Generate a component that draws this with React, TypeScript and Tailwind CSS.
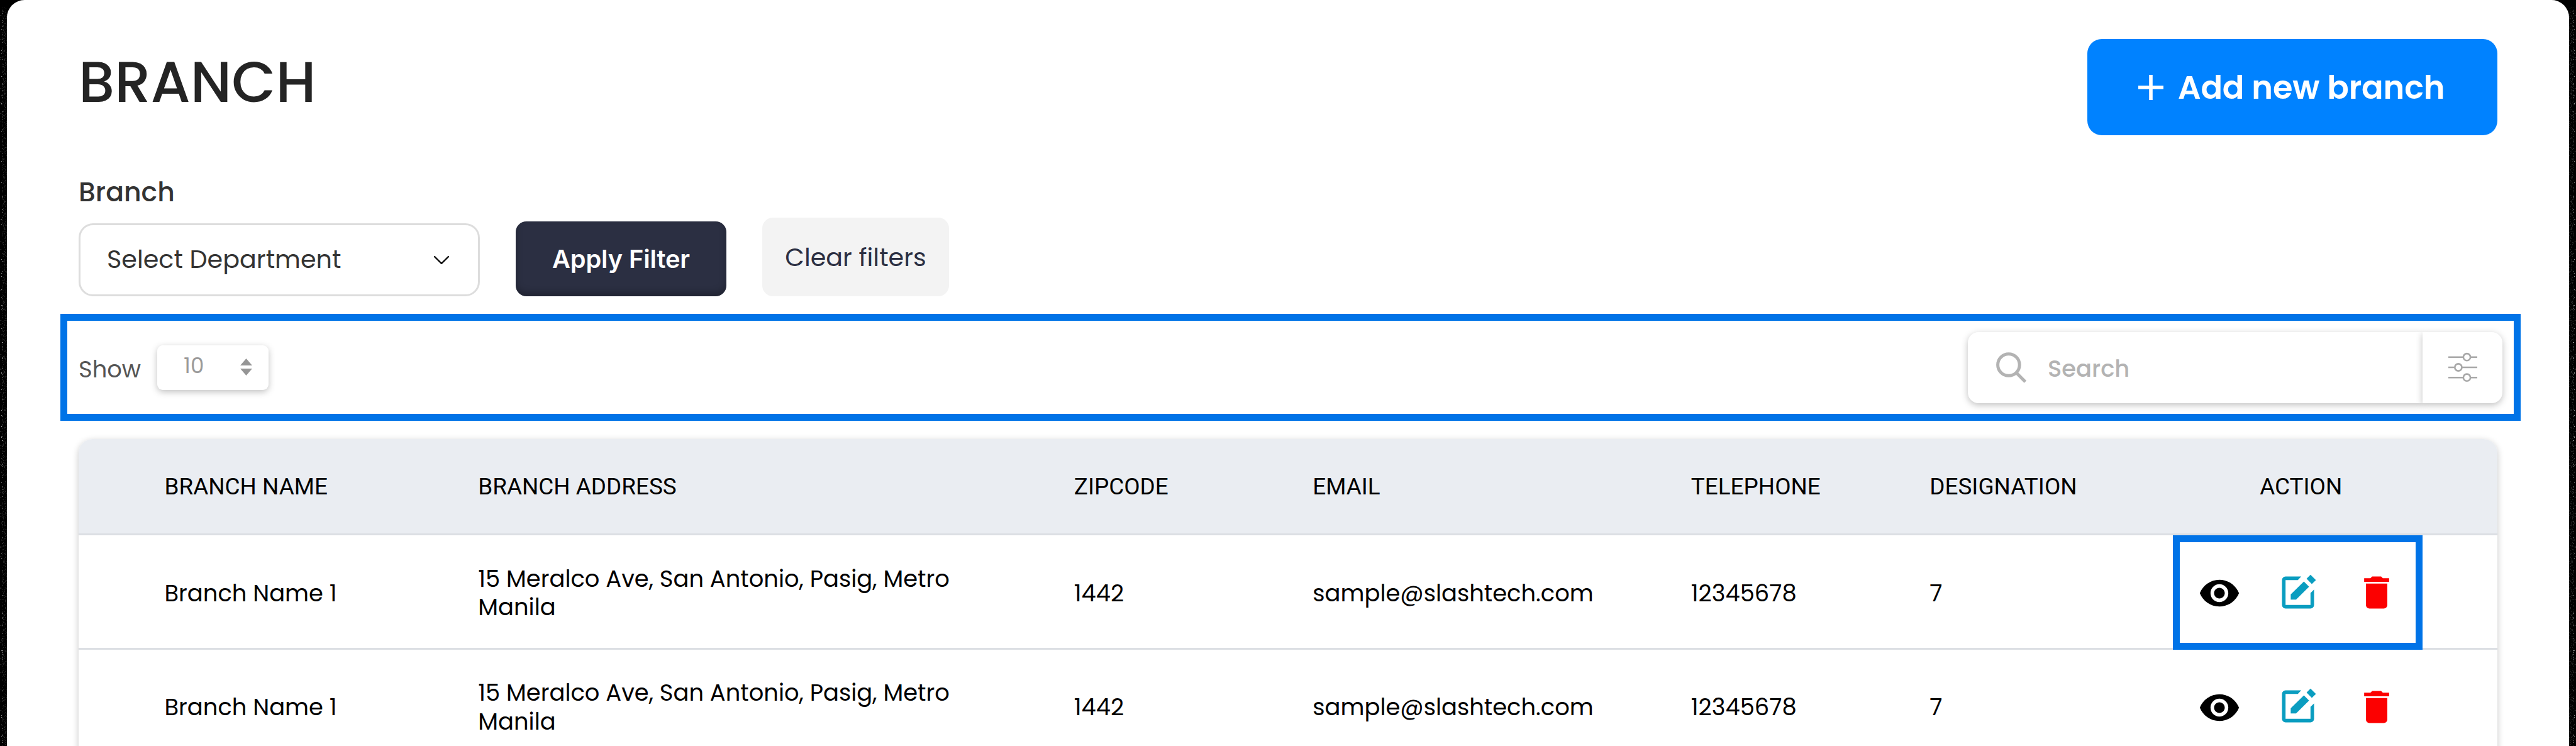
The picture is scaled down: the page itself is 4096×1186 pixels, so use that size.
import type { ReactNode } from "react";

const poppins = "font-['Poppins','Inter','Roboto',sans-serif]";
const inter = "font-['Inter','Roboto',sans-serif]";
const roboto = "font-['Roboto','Inter',sans-serif]";

const columns =
  "grid grid-cols-[498.8px_947.5px_379.5px_601.5px_379.5px_386.9px_397px] pl-[136.5px]";

const branch = {
  name: "Branch Name 1",
  address: "15 Meralco Ave, San Antonio, Pasig, Metro Manila",
  zip: "1442",
  email: "sample@slashtech.com",
  phone: "12345678",
  designation: "7",
};

const rows = [
  { ...branch, highlighted: true },
  { ...branch, highlighted: false },
];

/* Speckled grain that runs down the dark page edge. */
function grain(count: number, minX: number, spread: number, start: number) {
  let seed = start;
  const next = () => {
    seed = (seed * 16807) % 2147483647;
    return seed / 2147483647;
  };
  let d = "";
  for (let i = 0; i < count; i++) {
    const x = Math.floor(minX + next() * spread);
    const y = Math.floor(12 + next() * 1174);
    d += `M${x} ${y}h1v1h-1z`;
  }
  return d;
}
const brightGrain = grain(210, 1, 4, 77);
const dimGrain = grain(1700, 3, 8, 4211);

function EdgeGrain({ className }: { className: string }) {
  return (
    <svg className={`absolute top-0 h-[1186px] w-[11px] ${className}`} viewBox="0 0 11 1186">
      <path d={dimGrain} fill="#262626" />
      <path d={brightGrain} fill="#8c8c8c" />
    </svg>
  );
}

function SearchIcon() {
  return (
    <svg className="size-[56px] shrink-0" viewBox="0 0 56 56" fill="none" stroke="#b3b3b3" strokeWidth="5">
      <circle cx="22.9" cy="24" r="17.3" />
      <path d="M35 36.4 49.4 50.9" />
    </svg>
  );
}

function SlidersIcon() {
  return (
    <svg className="h-[48px] w-[46px]" viewBox="0 0 46 48" fill="none" stroke="#a8a8a8" strokeWidth="2.6">
      <path d="M0 7.7h23.6M35.4 7.7H46M0 24h9.8M21.6 24H46M0 40.2h23.6M35.4 40.2H46" />
      <circle cx="29.5" cy="7.7" r="5.6" />
      <circle cx="15.9" cy="24" r="5.6" />
      <circle cx="29.5" cy="40.2" r="5.6" />
    </svg>
  );
}

function EyeIcon() {
  return (
    <svg className="size-[68px]" viewBox="0 0 24 24" fill="#000">
      <path d="M12 4.5C7 4.5 2.73 7.61 1 12c1.73 4.39 6 7.5 11 7.5s9.27-3.11 11-7.5c-1.73-4.39-6-7.5-11-7.5zM12 17c-2.76 0-5-2.24-5-5s2.24-5 5-5 5 2.24 5 5-2.24 5-5 5zm0-8c-1.66 0-3 1.34-3 3s1.34 3 3 3 3-1.34 3-3-1.34-3-3-3z" />
    </svg>
  );
}

function EditIcon() {
  return (
    <svg className="mb-[3px] size-[68px]" viewBox="0 0 24 24" fill="#0a9dc0">
      <path d="M13.8 3 11.9 5H5v14h14v-6.7l2-2V19a2 2 0 0 1-2 2H5a2 2 0 0 1-2-2V5a2 2 0 0 1 2-2z" />
      <path d="m15.3 5.8 2.9 2.9L10.9 16h-3v-2.9z" />
      <path d="m19 2 3.05 3.05-2.3 2.2-2.95-3.05z" />
    </svg>
  );
}

function TrashIcon() {
  return (
    <svg className="mb-[2px] size-[68px]" viewBox="0 0 24 24" fill="#fc0000">
      <path d="M6 19c0 1.1.9 2 2 2h8c1.1 0 2-.9 2-2V7H6v12zM19 4h-3.5l-1-1h-5l-1 1H5v2h14V4z" />
    </svg>
  );
}

function Stepper() {
  return (
    <svg className="mb-[2px] h-[27px] w-[19px]" viewBox="0 0 19 27" fill="#959595">
      <path d="M0 10.9 9.5 0 19 10.9zM0 16h19L9.5 27z" />
    </svg>
  );
}

function Heading({ children, className = "" }: { children: ReactNode; className?: string }) {
  return <div className={className}>{children}</div>;
}

export default function App() {
  return (
    <div className={`relative h-[1186px] w-[4096px] overflow-hidden bg-black px-[11px] ${poppins}`}>
      <EdgeGrain className="left-0" />
      <EdgeGrain className="right-0 -scale-x-100" />

      <main className="relative h-full overflow-hidden rounded-t-[28px] bg-white px-[114px] pt-[62px]">
        <header className="flex h-[153px] items-start justify-between">
          <h1 className="text-[90.77px] leading-[137px] font-medium text-[#242424]">BRANCH</h1>
          <button className="flex h-[153px] w-[652px] items-center rounded-[23px] bg-[#0082ff] pl-[81px] text-white">
            <svg className="size-[40px]" viewBox="0 0 40 40" stroke="#fff" strokeWidth="5.6">
              <path d="M20 0v40M0 20h40" />
            </svg>
            <span className="ml-[23px] pt-px text-[51.06px] leading-[76px] font-semibold tracking-[-0.15px]">
              Add new branch
            </span>
          </button>
        </header>

        <section className="mt-[60px]">
          <div className="text-[42.55px] leading-[60px] font-medium text-[#333]">Branch</div>
          <div className="mt-[11px] flex h-[125px] items-end gap-[57px]">
            <div className="flex h-[116px] w-[638px] items-center justify-between rounded-[23px] border-3 border-[#ddd] pr-[46.5px] pl-[42px] text-[#333]">
              <span className="pb-[3px] text-[39.71px] leading-[60px]">Select Department</span>
              <svg className="h-[13px] w-[24px]" viewBox="0 0 24 13" fill="none" stroke="#000" strokeWidth="2.2" strokeLinecap="round" strokeLinejoin="round">
                <path d="M1.1 1.1 12 11.9 22.9 1.1" />
              </svg>
            </div>
            <button
              className={`h-[119px] w-[335px] rounded-[17px] bg-[#2b2f42] text-[39.71px] leading-[60px] font-semibold tracking-[-0.08px] text-white shadow-[inset_0_-6px_11px_rgba(0,0,0,0.25)] ${inter}`}
            >
              Apply Filter
            </button>
            <button className="h-[125px] w-[297px] rounded-[17px] bg-[#f3f3f3] text-[39.71px] leading-[60px] whitespace-nowrap text-[#2b2f42]">
              Clear filters
            </button>
          </div>
        </section>

        <section className="mt-[28px] -mr-[37px] -ml-[29px] flex h-[170px] items-center justify-between border-11 border-[#0073e7] pr-[18px] pl-[18px]">
          <div className="flex items-center">
            <span className="w-[125px] pt-[7px] text-[36.88px] leading-[55px] text-[#555]">Show</span>
            <div className="flex h-[71px] w-[177px] items-center justify-between rounded-[9px] bg-white pr-[26px] pl-[42px] shadow-[0_3px_11px_rgba(0,0,0,0.25)]">
              <span className="pb-[7px] text-[34.04px] leading-[50px] text-[#9a9a9a]">10</span>
              <Stepper />
            </div>
          </div>
          <div className="flex h-[113px]">
            <div className="flex w-[723px] items-center rounded-l-[17px] bg-white pl-[42px] shadow-[0_3px_11px_rgba(0,0,0,0.25)]">
              <SearchIcon />
              <span className="ml-[29px] pt-[4px] text-[36.88px] leading-[55px] font-medium text-[#b3b3b3]">Search</span>
            </div>
            <div className="flex w-[127px] items-center justify-center rounded-r-[17px] bg-white shadow-[0_3px_11px_rgba(0,0,0,0.25)]">
              <SlidersIcon />
            </div>
          </div>
        </section>

        <section className="mt-[29px] h-[600px] rounded-t-[22px] bg-white text-[36.88px] leading-[45.4px] text-black shadow-[0_3px_11px_rgba(0,0,0,0.22)]">
          <div className={`h-[153px] items-center rounded-t-[22px] border-b-3 border-[#dcdfe4] bg-[#eaedf2] pt-px ${columns} ${roboto}`}>
            <Heading>BRANCH NAME</Heading>
            <Heading>BRANCH ADDRESS</Heading>
            <Heading>ZIPCODE</Heading>
            <Heading>EMAIL</Heading>
            <Heading>TELEPHONE</Heading>
            <Heading>DESIGNATION</Heading>
            <Heading className="pl-[138px]">ACTION</Heading>
          </div>
          {rows.map((row, i) => (
            <div key={i} className={`relative h-[181.5px] items-center border-b-3 border-[#dcdfe4] pt-[6px] ${columns}`}>
              <div>{row.name}</div>
              <div className="w-[790px]">{row.address}</div>
              <div>{row.zip}</div>
              <div>{row.email}</div>
              <div>{row.phone}</div>
              <div>{row.designation}</div>
              <div className="flex items-center justify-center gap-[57px]">
                <EyeIcon />
                <EditIcon />
                <TrashIcon />
              </div>
              {row.highlighted && (
                <div className="absolute top-0 -bottom-[3px] left-[3330px] w-[397px] border-11 border-[#0073e7]" />
              )}
            </div>
          ))}
        </section>
      </main>
    </div>
  );
}
